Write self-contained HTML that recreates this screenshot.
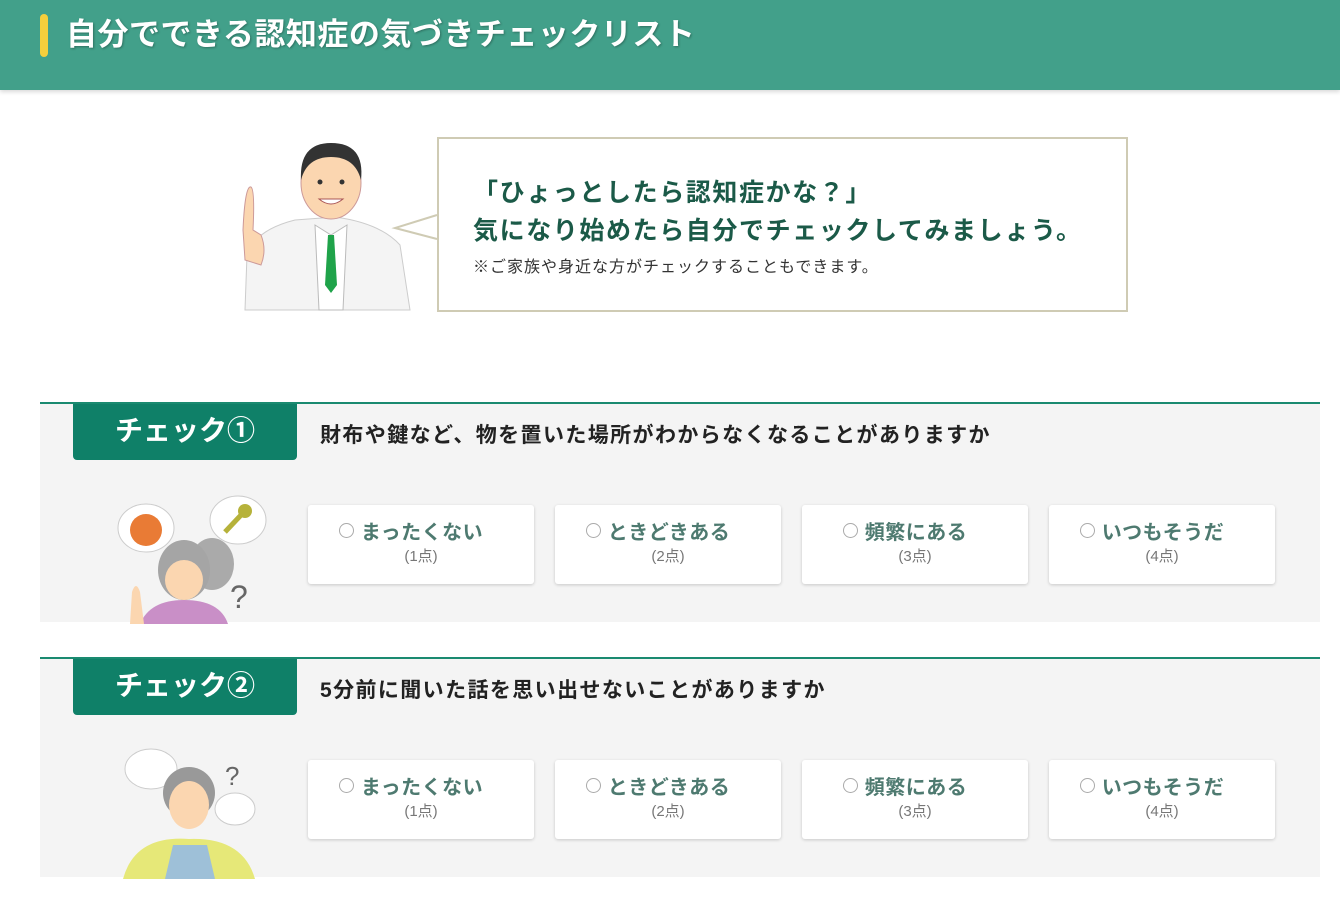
<!DOCTYPE html>
<html><head><meta charset="utf-8"><style>
*{margin:0;padding:0;box-sizing:border-box}
body{width:1340px;height:897px;background:#fff;font-family:"Liberation Sans","Noto Sans CJK JP",sans-serif;position:relative;overflow:hidden}
.hdr{position:absolute;left:0;top:0;width:1340px;height:90px;background:#42a08a;box-shadow:0 2px 4px rgba(0,0,0,.15)}
.hdr .bar{position:absolute;left:40px;top:14px;width:8px;height:43px;border-radius:4px;background:#f5cf3c}
.hdr h1{position:absolute;left:66px;top:14px;font-size:31px;line-height:42px;color:#fff;font-weight:bold;letter-spacing:0.5px;text-shadow:1px 1px 2px rgba(0,0,0,.3)}
.bubble{position:absolute;left:437px;top:137px;width:691px;height:175px;border:2px solid #cfcbb4;background:#fff}
.bubble p{position:absolute;left:34px;color:#1b5a48;font-weight:bold;font-size:25px;letter-spacing:1.6px;white-space:nowrap}
.bubble .s{font-size:16px;letter-spacing:1px;font-weight:normal;color:#333}
.sec{position:absolute;left:40px;width:1280px;height:220px;background:#f4f4f4;border-top:2px solid #1a8a70}
.tab{position:absolute;left:33px;top:0;width:224px;height:56px;background:#0f8068;border-radius:0 0 4px 4px;color:#fff;font-weight:bold;font-size:28px;text-align:center;line-height:54px}
.q{position:absolute;left:280px;top:15px;font-size:21px;letter-spacing:1.4px;font-weight:bold;color:#222;white-space:nowrap}
.btn{position:absolute;top:101px;width:226px;height:79px;background:#fff;border-radius:3px;box-shadow:0 1px 3px rgba(0,0,0,.18);text-align:center}
.btn b{display:block;margin-top:15px;padding-right:20px;font-size:20px;letter-spacing:0.5px;color:#4e7a70;line-height:26px}
.btn b:before{content:"";display:inline-block;width:13px;height:13px;border:1.5px solid #aaa;border-radius:50%;margin-right:7px;vertical-align:1px}
.btn span{display:block;font-size:15px;color:#777;line-height:22px;margin-left:0}
</style></head><body>
<div class="hdr"><div class="bar"></div><h1>自分でできる認知症の気づきチェックリスト</h1></div>

<svg style="position:absolute;left:225px;top:135px" width="215" height="176" viewBox="0 0 215 176">
<path d="M20 175 L22 120 Q30 95 70 85 L110 82 Q155 88 175 110 L185 175 Z" fill="#f4f4f4" stroke="#ccc"/>
<path d="M90 90 L106 100 L122 90 L118 175 L94 175 Z" fill="#fff" stroke="#bbb"/>
<path d="M103 100 L109 100 L112 150 L106 158 L100 150 Z" fill="#1fa34a"/>
<ellipse cx="106" cy="48" rx="30" ry="36" fill="#fbd6b0" stroke="#c99"/>
<path d="M76 45 Q74 8 106 8 Q140 8 136 45 Q130 22 106 22 Q82 22 76 45Z" fill="#333"/>
<circle cx="95" cy="47" r="2.5" fill="#333"/><circle cx="117" cy="47" r="2.5" fill="#333"/>
<path d="M94 64 Q106 74 118 64 Z" fill="#fff" stroke="#a55"/>
<path d="M20 125 L18 95 Q20 50 26 52 Q30 55 28 95 L36 100 Q42 115 36 130 Z" fill="#fbd6b0" stroke="#c99"/>
<path d="M212 80 L170 93 L212 104" fill="#fff" stroke="#cfcbb4" stroke-width="2"/>
</svg>
<div class="bubble">
<p style="top:34px">「ひょっとしたら認知症かな？」</p>
<p style="top:72px">気になり始めたら自分でチェックしてみましょう。</p>
<p class="s" style="top:114px">※ご家族や身近な方がチェックすることもできます。</p>
</div>

<div class="sec" style="top:402px">
<div class="tab">チェック①</div>
<div class="q">財布や鍵など、物を置いた場所がわからなくなることがありますか</div>
<svg style="position:absolute;left:70px;top:88px" width="160" height="132" viewBox="0 0 160 132">
<ellipse cx="36" cy="36" rx="28" ry="24" fill="#fff" stroke="#ccc"/><circle cx="36" cy="38" r="16" fill="#e97b35"/>
<ellipse cx="128" cy="28" rx="28" ry="24" fill="#fff" stroke="#ccc"/><path d="M115 40 L132 22" stroke="#b6b23a" stroke-width="5"/><circle cx="135" cy="19" r="7" fill="#b6b23a"/>
<ellipse cx="102" cy="72" rx="22" ry="26" fill="#aaa"/><ellipse cx="74" cy="78" rx="26" ry="30" fill="#a5a5a5"/>
<ellipse cx="74" cy="88" rx="19" ry="20" fill="#fbd6b0"/>
<path d="M30 132 Q40 108 74 108 Q110 108 118 132 Z" fill="#c98fc7"/>
<path d="M20 132 L22 100 Q26 88 30 100 L34 132Z" fill="#fbd6b0"/>
<text x="120" y="116" font-size="32" fill="#666" font-family="Liberation Sans">?</text>
</svg>
<div class="btn" style="left:268px"><b>まったくない</b><span>(1点)</span></div>
<div class="btn" style="left:515px"><b>ときどきある</b><span>(2点)</span></div>
<div class="btn" style="left:762px"><b>頻繁にある</b><span>(3点)</span></div>
<div class="btn" style="left:1009px"><b>いつもそうだ</b><span>(4点)</span></div>
</div>

<div class="sec" style="top:657px">
<div class="tab">チェック②</div>
<div class="q">5分前に聞いた話を思い出せないことがありますか</div>
<svg style="position:absolute;left:75px;top:86px" width="150" height="134" viewBox="0 0 150 134">
<ellipse cx="36" cy="24" rx="26" ry="20" fill="#fff" stroke="#ccc"/><ellipse cx="120" cy="64" rx="20" ry="16" fill="#fff" stroke="#ccc"/>
<ellipse cx="74" cy="48" rx="26" ry="26" fill="#999"/><ellipse cx="74" cy="60" rx="20" ry="24" fill="#fbd6b0"/>
<path d="M8 134 Q20 90 74 94 Q128 92 140 134Z" fill="#e6e878"/>
<path d="M50 134 L58 100 L92 100 L100 134Z" fill="#9ec0d8"/>
<text x="110" y="40" font-size="26" fill="#666" font-family="Liberation Sans">?</text>
</svg>
<div class="btn" style="left:268px"><b>まったくない</b><span>(1点)</span></div>
<div class="btn" style="left:515px"><b>ときどきある</b><span>(2点)</span></div>
<div class="btn" style="left:762px"><b>頻繁にある</b><span>(3点)</span></div>
<div class="btn" style="left:1009px"><b>いつもそうだ</b><span>(4点)</span></div>
</div>
</body></html>
